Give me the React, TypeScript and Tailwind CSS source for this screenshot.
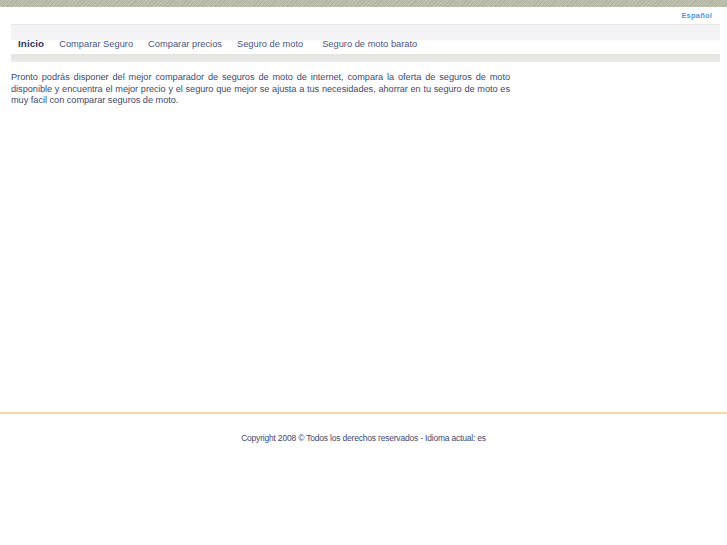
const NAV = ["Comparar Seguro", "Comparar precios", "Seguro de moto", "Seguro de moto barato"];

export default function App() {
  return (
    <div className="min-h-[545px] bg-white font-['Liberation_Sans',Arial,sans-serif]">
      <div className="h-[7px] bg-[repeating-linear-gradient(135deg,#b0b4a0_0px,#b0b4a0_1px,#bdc0ad_1px,#bdc0ad_3px)]" />

      <div className="flex h-[17px] items-center justify-end pr-[15px]">
        <a className="text-[7.5px] font-bold leading-none tracking-[0.2px] text-[#4a9be0]">Español</a>
      </div>

      <div className="ml-[11px] mr-[7px]">
        <div className="h-px bg-[#e8e8e8]" />
        <nav className="flex h-[29px] items-baseline gap-[15px] bg-[linear-gradient(#f2f2f4,#f4f4f6_50%,#ffffff_55%,#ffffff)] pl-[7px] pt-[13px] text-[9.3px] leading-[11px] text-[#4a5585]">
          <span className="text-[9.8px] font-bold tracking-[0.1px] text-[#2f3658]">Inicio</span>
          {NAV.map((n, i) => (
            <span key={n} className={i === 3 ? "ml-[4px]" : ""}>
              {n}
            </span>
          ))}
        </nav>
        <div className="h-[8px] bg-[linear-gradient(#e4e4e0,#ececea)]" />
      </div>

      <p className="mt-[10px] ml-[11px] w-[499px] text-justify text-[9.2px] leading-[11.5px] tracking-[-0.03px] text-[#3f4a6e]">
        Pronto podrás disponer del mejor comparador de seguros de moto de internet, compara la oferta de seguros de moto
        disponible y encuentra el mejor precio y el seguro que mejor se ajusta a tus necesidades, ahorrar en tu seguro de
        moto es muy facil con comparar seguros de moto.
      </p>

      <div className="mt-[305px] h-[2px] bg-[#fdd8a0]" />

      <p className="mt-[18px] text-center text-[8.5px] tracking-[-0.2px] text-[#3f4a6e]">
        Copyright 2008 © Todos los derechos reservados - Idioma actual: es
      </p>
    </div>
  );
}
